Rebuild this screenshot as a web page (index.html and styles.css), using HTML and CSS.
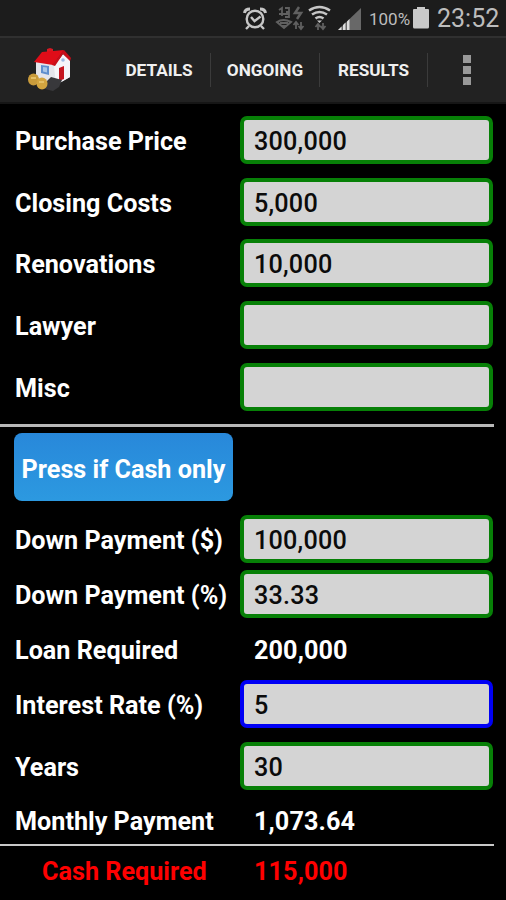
FILE: index.html
```html
<!DOCTYPE html>
<html lang="en">
<head>
<meta charset="utf-8">
<title>Purchase Costs</title>
<link rel="stylesheet" href="styles.css">
</head>
<body>
<div class="status">
<svg class="status-icons" width="122" height="34" viewBox="0 0 122 34">
<g fill="none" stroke="#c6c6c6" stroke-width="2.4">
<circle cx="15" cy="18" r="8.300"/><path d="M11 16l3.500 4 6-4.500"/><path d="M9 25l-3 3M21 25l3 3"/><path d="M4.500 12q.5-4 5.500-4M25.500 12q-.5-4-5.500-4" stroke-width="3"/>
</g>
<g fill="none" stroke="#606060" stroke-width="1.800">
<path d="M39 9l3-2v8M45 7h4v4h-3h3v5h-4M39 13h10"/><path d="M37 21q6-4 14 0l-7 6zM40 22h8M42 25h4" stroke-width="2"/><path d="M59 6l-4 6h6l-4 6" stroke-width="2.500"/><path d="M56 28v-7m-2.500 3l2.500-3 2.500 3M61 21v7m-2.500-3l2.500 3 2.500-3"/>
<path d="M78 29v-6m-2.500 3l2.500-3 2.500 3M83 22v6m-2.500-3l2.500 3 2.500-3"/>
</g>
<g fill="none" stroke="#c6c6c6" stroke-width="2.600"><path d="M69 9.500q10.500-7 21 0M72 13.500q7.500-5 15 0M75.500 17.500q4-3 8 0"/></g>
<path d="M77 19.500h5l-2.500 2.500z" fill="#c6c6c6"/>
<path d="M98 29L121 7v22z" fill="#686868"/>
<path d="M98 29l3.500-3.500V29zM103 29v-5l2.500-2.500V29zM107 29v-8.500l2.500-2.500v11z" fill="#ddd"/>
</svg>
<span class="percent">100%</span>
<svg class="battery" width="16" height="24" viewBox="0 0 16 24"><path d="M4 1h8v2h3q1 0 1 1V21q0 1.500-1.500 1.500h-13Q0 22.500 0 21V4q0-1 1-1h3z" fill="#c9c9c9"/></svg>
<span class="clock">23:52</span>
</div>
<div class="bar">
<svg class="logo" width="46" height="46" viewBox="0 0 46 46">
<path d="M8 14l17-2 17-3v20l-14 8-20-7z" fill="#e4e5eb"/>
<path d="M26 18l9-12 7 6v17l-14 8z" fill="#f5f5f9"/>
<path d="M19 6V1l3-1 3 1v4z" fill="#d91822"/>
<path d="M6 14L14 4l22-2-11 15z" fill="#df0d18"/>
<path d="M36 2L24 17l3 1 8-12 7 7 1-3z" fill="#c70e1a"/>
<path d="M13 17l8 1v9l-8-2z" fill="#608fce"/><path d="M15 19l4 .5v5l-4-1z" fill="#aac6e8"/>
<path d="M31 20l5-2v13l-5 2z" fill="#c51620"/>
<circle cx="35" cy="12" r="1.800" fill="#9bb9e4"/>
<path d="M18 34l5-5 11 3-3 7-6 4-8-2z" fill="#38383b"/>
<ellipse cx="5.500" cy="31.500" rx="5.500" ry="6" fill="#c99b3b"/><ellipse cx="14" cy="35.500" rx="5.500" ry="6" fill="#d3a540"/>
<path d="M3 30h5M11 34h5" stroke="#e5c066" stroke-width="2"/>
</svg>
<div class="tab details">DETAILS</div>
<div class="tab ongoing">ONGOING</div>
<div class="tab results">RESULTS</div>
<div class="more"><i></i><i></i><i></i></div>
</div>
<main>
<section class="costs">
<div class="row"><span class="label">Purchase Price</span><div class="field">300,000</div></div>
<div class="row"><span class="label">Closing Costs</span><div class="field">5,000</div></div>
<div class="row"><span class="label">Renovations</span><div class="field">10,000</div></div>
<div class="row"><span class="label">Lawyer</span><div class="field"></div></div>
<div class="row"><span class="label">Misc</span><div class="field"></div></div>
</section>
<div class="rule"></div>
<button class="cash">Press if Cash only</button>
<section class="loan">
<div class="row"><span class="label">Down Payment ($)</span><div class="field">100,000</div></div>
<div class="row"><span class="label">Down Payment (%)</span><div class="field">33.33</div></div>
<div class="row"><span class="label">Loan Required</span><div class="value">200,000</div></div>
<div class="row"><span class="label">Interest Rate (%)</span><div class="field focus">5</div></div>
<div class="row years"><span class="label">Years</span><div class="field">30</div></div>
<div class="row monthly"><span class="label">Monthly Payment</span><div class="value">1,073.64</div></div>
</section>
<div class="rule thin"></div>
<div class="row total"><span class="label">Cash Required</span><div class="value">115,000</div></div>
</main>
</body>
</html>
```
FILE: styles.css
```css
* { box-sizing: border-box; }
body { margin: 0; width: 506px; height: 900px; overflow: hidden; background: #000; color: #fff; font-family: Roboto, "Liberation Sans", sans-serif; }
svg { display: block; flex: none; }
.status { height: 36px; background: #1c1c1c; display: flex; align-items: center; padding-left: 240px; color: #bdbdbd; white-space: nowrap; }
.percent { font-size: 17px; width: 41px; margin-left: 7px; padding-top: 2px; }
.battery { margin-left: 3px; }
.clock { font-size: 25px; margin-left: 8px; line-height: 36px; padding-top: 2px; }
.bar { height: 68px; background: #222; border-top: 2px solid #303030; border-bottom: 2px solid #161616; display: flex; align-items: center; padding-left: 28px; }
.logo { margin: 2px 34px 0 0; }
.tab { height: 34px; line-height: 35px; border-right: 1px solid #3b3b3b; font-size: 17.2px; font-weight: 700; text-align: center; color: #f0f0f0; }
.details { width: 103px; }
.ongoing { width: 109px; }
.results { width: 108px; }
.more { display: flex; flex-direction: column; gap: 3px; margin-left: 35px; }
.more i { width: 8px; height: 8px; background: #999; }
main { padding-top: 5px; font-size: 25.2px; font-weight: 700; }
.row { display: flex; align-items: center; height: 55px; padding-left: 15px; width: 493px; }
.costs { height: 310px; }
.costs .row { height: 61.8px; }
.label { width: 225px; white-space: nowrap; padding-top: 3px; }
.field { width: 253px; height: 48px; border: 4px solid #078007; border-radius: 7px; background: #d4d4d4; color: #0b0b0b; padding-left: 10px; line-height: 43px; font-weight: 500; letter-spacing: .2px; }
.focus { border-color: #0000f5; }
.value { padding: 3px 0 0 14px; letter-spacing: .1px; }
.rule { width: 494px; height: 3px; background: #b8b8b8; margin: 5px 0 6px; }
.cash { display: block; margin: 0 0 10px 14px; width: 219px; height: 68px; border: 0; border-radius: 8px; padding: 4px 0 0; background: linear-gradient(#2888da, #2c99e0); color: #fff; font: inherit; white-space: nowrap; }
.years { margin-top: 7px; }
.monthly { height: 51px; padding-top: 3px; }
.rule.thin { height: 2px; background: #c8c8c8; margin: 0; }
.total { height: 48px; color: #f00; }
.total .label { padding-left: 27px; }
```
